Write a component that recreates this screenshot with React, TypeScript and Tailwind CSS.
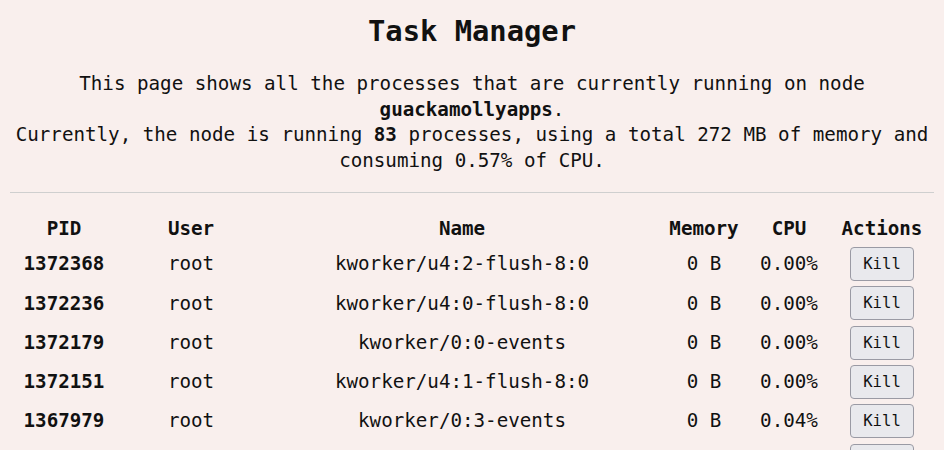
import React from "react";

const processes = [
  { pid: 1372368, user: "root", name: "kworker/u4:2-flush-8:0", memory: "0 B", cpu: "0.00%" },
  { pid: 1372236, user: "root", name: "kworker/u4:0-flush-8:0", memory: "0 B", cpu: "0.00%" },
  { pid: 1372179, user: "root", name: "kworker/0:0-events", memory: "0 B", cpu: "0.00%" },
  { pid: 1372151, user: "root", name: "kworker/u4:1-flush-8:0", memory: "0 B", cpu: "0.00%" },
  { pid: 1367979, user: "root", name: "kworker/0:3-events", memory: "0 B", cpu: "0.04%" },
  { pid: 1367412, user: "root", name: "kworker/1:1-events", memory: "0 B", cpu: "0.00%" },
  { pid: 1366021, user: "root", name: "kworker/1:0-events", memory: "0 B", cpu: "0.00%" },
];

export default function App() {
  return (
    <div
      className="min-h-screen bg-[#f9efed] px-[10px] text-[#111] text-[19.2px] leading-[25.6px]"
      style={{ fontFamily: '"DejaVu Sans Mono", "Liberation Mono", monospace' }}
    >
      <h1 className="pt-[14px] text-center text-[28.8px] leading-[34px] font-bold">Task Manager</h1>

      <p className="mt-[23px] text-center">
        This page shows all the processes that are currently running on node <strong>guackamollyapps</strong>.
        <br />
        Currently, the node is running <strong>83</strong> processes, using a total 272 MB of memory and consuming
        0.57% of CPU.
      </p>

      <hr className="mt-[19px] border-t border-[#cfcfcf]" />

      <table className="mt-[20px] w-full table-fixed border-collapse">
        <colgroup>
          <col className="w-[108px]" />
          <col className="w-[146px]" />
          <col className="w-[396px]" />
          <col className="w-[88px]" />
          <col className="w-[82px]" />
          <col className="w-[104px]" />
        </colgroup>
        <thead>
          <tr className="h-[31px] font-bold">
            <th className="p-0">PID</th>
            <th className="p-0">User</th>
            <th className="p-0">Name</th>
            <th className="p-0">Memory</th>
            <th className="p-0">CPU</th>
            <th className="p-0">Actions</th>
          </tr>
        </thead>
        <tbody>
          {processes.map((p) => (
            <tr key={p.pid} className="h-[39.3px] text-center">
              <td className="p-0 font-bold">{p.pid}</td>
              <td className="p-0">{p.user}</td>
              <td className="p-0">{p.name}</td>
              <td className="p-0">{p.memory}</td>
              <td className="p-0">{p.cpu}</td>
              <td className="p-0">
                <button className="h-[34px] rounded-[4px] border border-[#9a9aa4] bg-[#e9e9ed] px-[12px] text-[15.6px] leading-[20px] text-[#111]">
                  Kill
                </button>
              </td>
            </tr>
          ))}
        </tbody>
      </table>
    </div>
  );
}
